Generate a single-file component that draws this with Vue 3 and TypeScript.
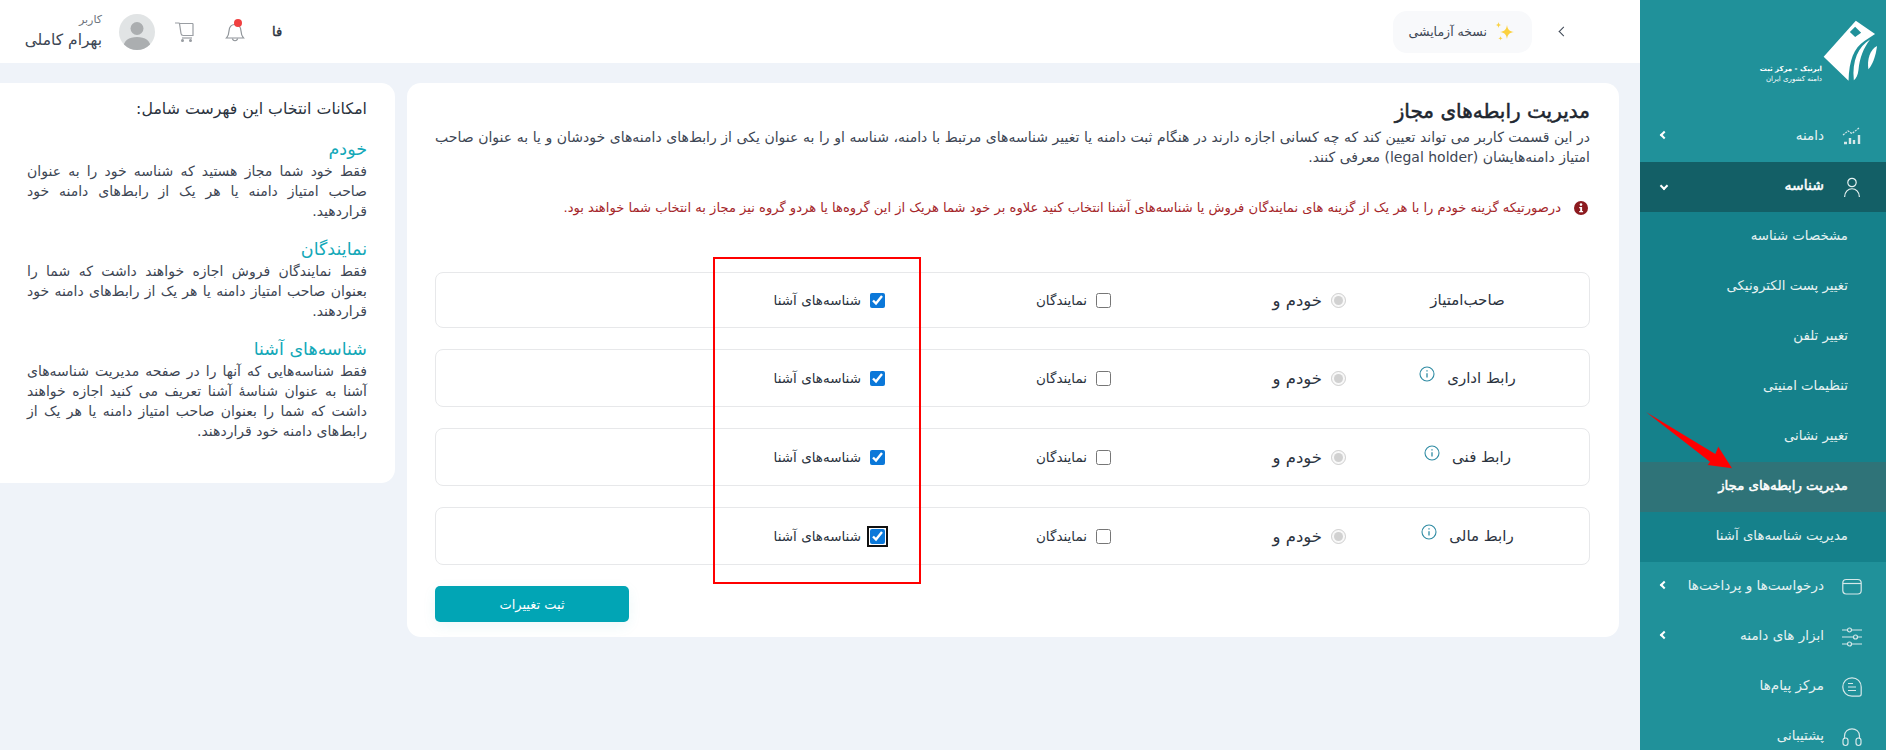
<template>
  <div class="page" dir="rtl">
    <aside class="sidebar">
      <div class="logo">
        <svg class="logo-mark" viewBox="200 0 190 255" width="63" height="85">
          <path fill="#fff" fill-rule="evenodd" d="M302 32 L360 72 L328 93 C296 115 282 150 280 213 L205 140 Z M300 50 L284 66 L300 81 L318 68 Z" />
          <path fill="#fff" d="M345 88 C310 110 290 150 296 211 C304 205 308 195 310 180 C314 140 325 115 345 88 Z" />
          <path fill="#fff" d="M366 108 C345 118 335 150 340 178 C352 165 362 140 366 108 Z" />
        </svg>
        <div class="logo-text">
          <b>ایرنیک - مرکز ثبت</b>
          <span>دامنه کشوری ایران</span>
        </div>
      </div>

      <nav>
        <div class="nav-item">
          <svg class="nav-icon" viewBox="0 0 20 20" fill="none" stroke="#d5e8e9" stroke-width="1.2">
            <path d="M1 8 L6 4 L10 6.5 L17 1" stroke-dasharray="2 1" />
            <path d="M2 16h3M8 11v6M12 13v4M17 8v9" stroke-width="2.4" />
          </svg>
          <span class="nav-label">دامنه</span>
          <span class="chev left" />
        </div>

        <div class="nav-item open">
          <svg class="nav-icon" viewBox="0 0 20 20" fill="none" stroke="#e6f2f2" stroke-width="1.2">
            <circle cx="10" cy="5.5" r="4.2" />
            <path d="M2.6 20 C2.6 9 17.4 9 17.4 20" />
          </svg>
          <span class="nav-label">شناسه</span>
          <span class="chev down" />
        </div>
        <div class="submenu">
          <div
            v-for="item in subItems"
            :key="item"
            class="sub-item"
            :class="{ active: item === activeSub }"
          >{{ item }}</div>
        </div>

        <div class="nav-item">
          <svg class="nav-icon" viewBox="0 0 20 20" fill="none" stroke="#d5e8e9" stroke-width="1.2">
            <rect x="0.8" y="2.5" width="18.4" height="14.5" rx="3.5" />
            <path d="M1 6.5h18" />
          </svg>
          <span class="nav-label">درخواست‌ها و پرداخت‌ها</span>
          <span class="chev left" />
        </div>
        <div class="nav-item">
          <svg class="nav-icon" viewBox="0 0 20 20" fill="none" stroke="#d5e8e9" stroke-width="1.2">
            <path d="M0 3h5M10 3h10M0 10h11M16 10h4M0 17h5M10 17h10" />
            <circle cx="7.5" cy="3" r="2" />
            <circle cx="13.5" cy="10" r="2" />
            <circle cx="7.5" cy="17" r="2" />
          </svg>
          <span class="nav-label">ابزار های دامنه</span>
          <span class="chev left" />
        </div>
        <div class="nav-item">
          <svg class="nav-icon" viewBox="0 0 20 20" fill="none" stroke="#d5e8e9" stroke-width="1.2">
            <path d="M10 .8 C15.2 .8 19.2 4.8 19.2 10 V17 C19.2 18.4 18.4 19.2 17 19.2 H10 C4.8 19.2 .8 15.2 .8 10 C.8 4.8 4.8 .8 10 .8 Z" />
            <path d="M6 6.5h5M6 10h8M6 13.5h8" />
          </svg>
          <span class="nav-label">مرکز پیام‌ها</span>
        </div>
        <div class="nav-item">
          <svg class="nav-icon" viewBox="0 0 20 20" fill="none" stroke="#d5e8e9" stroke-width="1.2">
            <path d="M2.5 12 V9 C2.5 -.5 17.5 -.5 17.5 9 V12" />
            <rect x="1" y="11" width="5" height="7.5" rx="2.4" />
            <rect x="14" y="11" width="5" height="7.5" rx="2.4" />
          </svg>
          <span class="nav-label">پشتیبانی</span>
        </div>
      </nav>
    </aside>

    <div class="body">
      <header class="topbar">
        <div class="top-start">
          <span class="back" />
          <div class="beta">
            <svg viewBox="0 0 20 20" width="20" height="20" fill="#fbd13f">
              <path d="M12 3 C12.6 7.5 14.5 9.4 19 10 C14.5 10.6 12.6 12.5 12 17 C11.4 12.5 9.500 10.600 5 10 C9.500 9.400 11.400 7.500 12 3 Z" />
              <path d="M3.500 0 C3.800 2 4.500 2.700 6.500 3 C4.500 3.300 3.800 4 3.500 6 C3.200 4 2.500 3.300 .5 3 C2.500 2.700 3.200 2 3.500 0 Z" />
              <path d="M5.500 14 C5.700 15.500 6.300 16.100 7.800 16.300 C6.300 16.500 5.700 17.100 5.500 18.600 C5.300 17.100 4.700 16.500 3.200 16.300 C4.700 16.100 5.300 15.500 5.500 14 Z" />
            </svg>
            <span>نسخه آزمایشی</span>
          </div>
        </div>

        <div class="top-end">
          <span class="lang">فا</span>
          <span class="bell">
            <svg viewBox="0 0 20 20" width="20" height="20" fill="none" stroke="#8f9499" stroke-width="1.2">
              <path d="M1.500 16 C3.500 14 3.800 12 4 9 C4.300 4.500 6.500 2.500 10 2.500 C13.500 2.500 15.700 4.500 16 9 C16.200 12 16.500 14 18.500 16 Z" />
              <path d="M7.500 16.500 C7.800 19.500 12.200 19.500 12.500 16.500" />
            </svg>
            <i class="dot" />
          </span>
          <svg class="cart" viewBox="0 0 20 20" width="20" height="20" fill="none" stroke="#9a9ea3" stroke-width="1.2">
            <path d="M19 1.500 H5.500 L7 11.500 C7.200 12.800 8 13.500 9.200 13.500 H19 L19 1.500 M5.500 1.500 L5 1 H1" />
            <path d="M8 16h10" />
            <circle cx="8.500" cy="18.500" r=".9" fill="#9a9ea3" />
            <circle cx="16.500" cy="18.500" r=".9" fill="#9a9ea3" />
          </svg>
          <div class="avatar">
            <svg viewBox="0 0 36 36" width="36" height="36">
              <circle cx="18" cy="14.500" r="6.500" fill="#abaeb0" />
              <path d="M4 36 C4 26 10 23 18 23 C26 23 32 26 32 36 Z" fill="#abaeb0" />
            </svg>
          </div>
          <div class="user">
            <span class="user-role">کاربر</span>
            <span class="user-name">بهرام کاملی</span>
          </div>
        </div>
      </header>

      <main class="content">
        <section class="card">
          <h1>مدیریت رابطه‌های مجاز</h1>
          <p class="desc">
            در این قسمت کاربر می تواند تعیین کند که چه کسانی اجازه دارند در هنگام ثبت دامنه یا تغییر شناسه‌های مرتبط با دامنه، شناسه او را به عنوان یکی از رابط‌های دامنه‌های خودشان و یا به عنوان صاحب امتیاز دامنه‌هایشان (legal holder) معرفی کنند.
          </p>
          <p class="alert">
            <svg viewBox="0 0 14 14" width="14" height="14">
              <circle cx="7" cy="7" r="7" fill="#8c1a1f" />
              <circle cx="7" cy="3.600" r="1.300" fill="#fff" />
              <path d="M5.200 6h2.900v4h1v1.200H5.200V10h1V7.200h-1z" fill="#fff" />
            </svg>
            <span>درصورتیکه گزینه خودم را با هر یک از گزینه های نمایندگان فروش یا شناسه‌های آشنا انتخاب کنید علاوه بر خود شما هریک از این گروه‌ها یا هردو گروه نیز مجاز به انتخاب شما خواهند بود.</span>
          </p>

          <div class="rows">
            <div v-for="row in rows" :key="row.label" class="row">
              <div class="role">
                <span>{{ row.label }}</span>
                <svg v-if="row.info" class="info" viewBox="0 0 16 16" width="16" height="16" fill="none" stroke="#2f8ba3" stroke-width="1.100">
                  <circle cx="8" cy="8" r="7" />
                  <path d="M8 7.200v4.300M8 4.200v1.200" stroke-width="1.300" />
                </svg>
              </div>
              <label class="opt self">
                <input type="radio" checked disabled>
                <span>خودم و</span>
              </label>
              <label class="opt small">
                <input type="checkbox">
                <span>نمایندگان</span>
              </label>
              <label class="opt small">
                <input type="checkbox" checked :class="{ focused: row.focused }">
                <span>شناسه‌های آشنا</span>
              </label>
            </div>
          </div>

          <button class="save" type="button">ثبت تغییرات</button>
        </section>

        <aside class="help">
          <h2>امکانات انتخاب این فهرست شامل:</h2>
          <div v-for="block in helpBlocks" :key="block.title" class="help-block">
            <h3>{{ block.title }}</h3>
            <p>{{ block.text }}</p>
          </div>
        </aside>
      </main>
    </div>

    <!-- annotations drawn on top of the screenshot -->
    <div class="mark-box" />
    <svg class="mark-arrow" viewBox="0 0 90 60" width="90" height="60">
      <path fill="#f00" d="M0 0 L69.300 42 L72.300 34.700 L86 56.300 L61.700 53 L64 49.700 Z" />
    </svg>
  </div>
</template>

<script setup lang="ts">
interface Row {
  label: string
  info: boolean
  focused: boolean
}

const activeSub = 'مدیریت رابطه‌های مجاز'

const subItems: string[] = [
  'مشخصات شناسه',
  'تغییر پست الکترونیکی',
  'تغییر تلفن',
  'تنظیمات امنیتی',
  'تغییر نشانی',
  activeSub,
  'مدیریت شناسه‌های آشنا',
]

const rows: Row[] = [
  { label: 'صاحب‌امتیاز', info: false, focused: false },
  { label: 'رابط اداری', info: true, focused: false },
  { label: 'رابط فنی', info: true, focused: false },
  { label: 'رابط مالی', info: true, focused: true },
]

const helpBlocks = [
  {
    title: 'خودم',
    text: 'فقط خود شما مجاز هستید که شناسه خود را به عنوان صاحب امتیاز دامنه یا هر یک از رابط‌های دامنه خود قراردهید.',
  },
  {
    title: 'نمایندگان',
    text: 'فقط نمایندگان فروش اجازه خواهند داشت که شما را بعنوان صاحب امتیاز دامنه یا هر یک از رابط‌های دامنه خود قراردهند.',
  },
  {
    title: 'شناسه‌های آشنا',
    text: 'فقط شناسه‌هایی که آنها را در صفحه مدیریت شناسه‌های آشنا به عنوان شناسۀ آشنا تعریف می کنید اجازه خواهند داشت که شما را بعنوان صاحب امتیاز دامنه یا هر یک از رابط‌های دامنه خود قراردهند.',
  },
]
</script>

<style>
html,
body {
  margin: 0;
  background: #eff3f9;
}
</style>

<style scoped>
.page {
  position: relative;
  display: flex;
  width: 1886px;
  height: 750px;
  overflow: hidden;
  background: #eff3f9;
  color: #3d4654;
  font-family: "DejaVu Sans", sans-serif;
  font-size: 13px;
}

.sidebar {
  flex: 0 0 246px;
  background: #20919a;
  color: #e6f2f2;
}

.logo {
  display: flex;
  align-items: flex-start;
  height: 102px;
  padding: 10px 1px 0 0;
}

.logo-mark {
  flex: none;
}

.logo-text {
  display: flex;
  flex-direction: column;
  margin-top: 54px;
  color: #fff;
  font-size: 7px;
  line-height: 10px;
  white-space: nowrap;
}

.logo-text span {
  font-size: 7px;
}

.nav-item {
  display: flex;
  align-items: center;
  height: 50px;
  padding: 0 24px 0 21px;
}

.nav-icon {
  flex: 0 0 20px;
  width: 20px;
  height: 20px;
  margin-left: 18px;
}

.nav-label {
  flex: 1;
  margin-bottom: 4px;
  font-size: 13.500px;
  white-space: nowrap;
}

.chev {
  display: block;
  width: 4px;
  height: 4px;
  margin-bottom: 4px;
  border-style: solid;
  border-color: #fff;
  border-width: 0 0 2px 2px;
}

.chev.left {
  transform: rotate(45deg);
}

.chev.down {
  transform: rotate(-45deg);
  margin: -3px 0 0;
}

.nav-item.open {
  background: #135f66;
  color: #fff;
}

.nav-item.open .nav-label {
  font-size: 14px;
  -webkit-text-stroke: 0.5px #fff;
}

.submenu {
  background: #15818b;
}

.sub-item {
  display: flex;
  align-items: center;
  height: 50px;
  box-sizing: border-box;
  padding: 0 38px 4px 0;
  font-size: 13.300px;
  white-space: nowrap;
}

.sub-item.active {
  background: #2f7378;
  color: #fff;
  -webkit-text-stroke: 0.5px #fff;
}

.body {
  flex: 1;
  display: flex;
  flex-direction: column;
  min-width: 0;
}

.topbar {
  display: flex;
  align-items: center;
  justify-content: space-between;
  height: 63px;
  flex: 0 0 63px;
  background: #fff;
}

.top-start {
  display: flex;
  align-items: center;
  gap: 28px;
  padding-right: 73px;
}

.back {
  width: 6px;
  height: 6px;
  border-style: solid;
  border-color: #3d4654;
  border-width: 0 0 1.500px 1.500px;
  transform: rotate(45deg);
}

.beta {
  display: flex;
  align-items: center;
  gap: 8px;
  width: 139px;
  height: 42px;
  box-sizing: border-box;
  padding-right: 17px;
  border-radius: 14px;
  background: #f8f9fb;
  font-size: 12.500px;
  white-space: nowrap;
}

.top-end {
  display: flex;
  align-items: center;
  padding-left: 23px;
}

.lang {
  margin-left: 27px;
  font-size: 13px;
  color: #2b3340;
  -webkit-text-stroke: 0.4px #2b3340;
}

.bell {
  position: relative;
  display: block;
  height: 20px;
  margin-left: 31px;
}

.dot {
  position: absolute;
  top: -3px;
  left: 9px;
  width: 8px;
  height: 8px;
  border-radius: 50%;
  background: #f04040;
}

.cart {
  margin-left: 19px;
}

.avatar {
  width: 36px;
  height: 36px;
  margin-left: 17px;
  overflow: hidden;
  border-radius: 50%;
  background: #e1e4e5;
}

.avatar svg {
  display: block;
}

.user {
  display: flex;
  flex-direction: column;
  gap: 3px;
  width: 79px;
  white-space: nowrap;
}

.user-role {
  font-size: 11px;
  line-height: 14px;
  color: #6c737c;
}

.user-name {
  font-size: 15.500px;
  line-height: 20px;
}

.content {
  flex: 1;
  display: flex;
  align-items: flex-start;
  gap: 12px;
  padding: 20px 21px 0 0;
}

.card {
  flex: 0 0 1212px;
  height: 554px;
  box-sizing: border-box;
  padding: 16px 29px 0 28px;
  border-radius: 14px;
  background: #fff;
}

h1 {
  margin: 0;
  font-size: 20px;
  line-height: 24px;
  font-weight: 400;
  color: #20262f;
  -webkit-text-stroke: 0.5px #20262f;
}

.desc {
  margin: 4px 0 0;
  font-size: 14px;
  line-height: 20px;
  text-align: justify;
}

.alert {
  display: flex;
  align-items: center;
  gap: 13px;
  margin: 31px 2px 0 0;
  font-size: 13.100px;
  line-height: 20px;
  color: #a5262a;
  white-space: nowrap;
}

.alert svg {
  flex: none;
}

.rows {
  display: flex;
  flex-direction: column;
  gap: 21px;
  margin-top: 54px;
}

.row {
  display: grid;
  grid-template-columns: 243px 235px 226px 1fr;
  align-items: center;
  height: 58px;
  box-sizing: border-box;
  border: 1px solid #e7e8ea;
  border-radius: 8px;
}

.row:first-child {
  height: 56px;
}

.role {
  display: flex;
  justify-content: center;
  align-items: center;
  gap: 12px;
  font-size: 15px;
  color: #2b3340;
  white-space: nowrap;
}

.info {
  margin-top: -9px;
}

.opt {
  display: flex;
  align-items: center;
  gap: 9px;
  white-space: nowrap;
  color: #2b3340;
}

.opt input {
  flex: none;
  width: 15px;
  height: 15px;
  margin: 0;
  accent-color: #0b78d9;
}

.opt.self {
  font-size: 16.500px;
}

.opt.small {
  font-size: 13.500px;
}

.focused {
  outline: 2px solid #111;
  outline-offset: 1px;
}

.save {
  display: block;
  width: 194px;
  height: 36px;
  margin: 21px auto 0 0;
  border: 0;
  border-radius: 5px;
  background: #01a5b5;
  color: #fff;
  font-family: inherit;
  font-size: 13px;
  box-shadow: 0 4px 14px rgba(1, 165, 181, 0.08);
}

.help {
  flex: 0 0 395px;
  height: 400px;
  box-sizing: border-box;
  padding: 14px 28px 0 27px;
  border-radius: 0 14px 14px 0;
  background: #fff;
}

h2 {
  margin: 0;
  font-size: 15.800px;
  line-height: 24px;
  font-weight: 400;
  color: #2b3340;
}

.help-block {
  margin-top: 17px;
}

h3 {
  margin: 0;
  font-size: 17.500px;
  line-height: 23px;
  font-weight: 400;
  color: #13a8b8;
}

.help-block p {
  margin: 0;
  font-size: 14px;
  line-height: 20px;
  text-align: justify;
}

.mark-box {
  position: absolute;
  left: 713px;
  top: 257px;
  width: 208px;
  height: 327px;
  box-sizing: border-box;
  border: 2px solid #f00;
  pointer-events: none;
}

.mark-arrow {
  position: absolute;
  left: 1646px;
  top: 412px;
}
</style>
